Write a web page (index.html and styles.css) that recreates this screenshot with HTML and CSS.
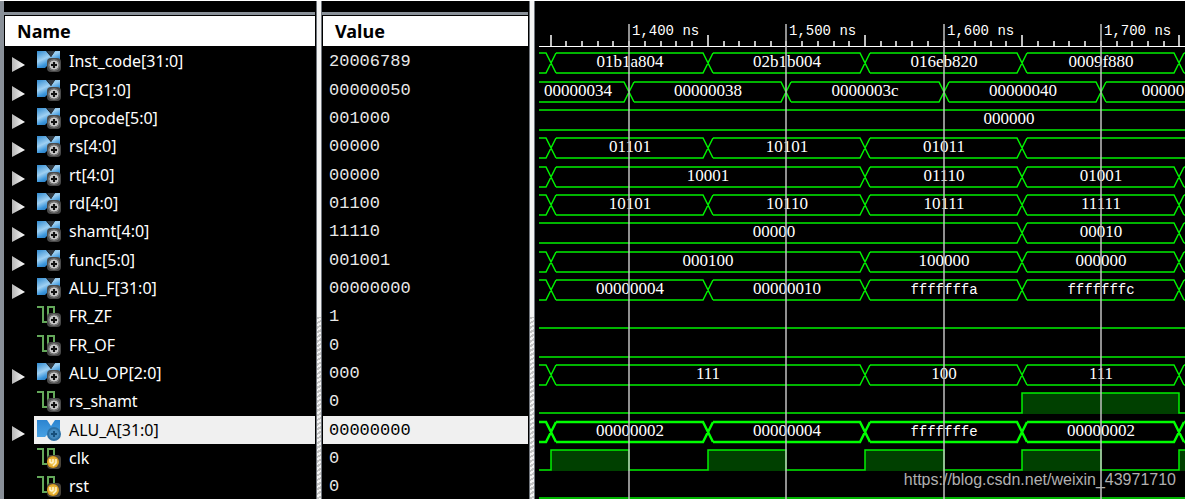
FILE: index.html
```html
<!DOCTYPE html>
<html lang="en">
<head>
<meta charset="utf-8">
<title>Waveform viewer</title>
<link rel="stylesheet" href="styles.css">
</head>
<body>
<svg class="defs" aria-hidden="true">
  <defs>
    <linearGradient id="blue" x1="0" y1="0" x2="0.6" y2="1"><stop offset="0" stop-color="#2f8ad0"/><stop offset=".45" stop-color="#9fd0f2"/><stop offset=".7" stop-color="#3d97dc"/><stop offset="1" stop-color="#1763a8"/></linearGradient>
    <linearGradient id="deep" x1="0" y1="0" x2="0" y2="1"><stop offset="0" stop-color="#2b84d0"/><stop offset="1" stop-color="#4aa3e4"/></linearGradient>
    <linearGradient id="arrow" x1="0" y1="0" x2="1" y2="0"><stop offset="0" stop-color="#b4b4b4"/><stop offset="1" stop-color="#fff"/></linearGradient>
    <radialGradient id="gold"><stop offset="0" stop-color="#ffe070"/><stop offset="1" stop-color="#d99a18"/></radialGradient>
    <symbol id="expander" viewBox="0 0 14 16"><path d="M0 0L13 8L0 15Z" fill="url(#arrow)"/></symbol>
    <symbol id="gear" viewBox="0 0 14 14"><rect width="14" height="14" rx="4" fill="#4a4a4a"/><circle cx="7" cy="7" r="6" fill="#777"/><circle cx="7" cy="7" r="4" fill="#b8b8b8" stroke="#d0d0d0" stroke-width="1"/><path d="M7 4V10M4 7H10" stroke="#111" stroke-width="2"/></symbol>
    <symbol id="bus" viewBox="0 0 25 23"><path d="M0 1H9L14 7L18 1H23V19H14L10 16L8 18H0Z" fill="url(#blue)"/><path d="M10 1L14 7L18 1Z" fill="#303840"/><use href="#gear" x="10" y="8" width="14" height="14"/></symbol>
    <symbol id="bus-on" viewBox="0 0 25 23"><path d="M0 1H10L14 7L18 1H23V19H14L10 16L8 18H0Z" fill="url(#deep)"/><circle cx="17" cy="15" r="6" fill="#4489bd" stroke="#2d71a6" stroke-width="2"/><path d="M17 12V18M14 15H20" stroke="#164e7a" stroke-width="2"/></symbol>
    <symbol id="wire" viewBox="0 0 25 23"><path d="M0 2H6V17H11V2H17V10" fill="none" stroke="#64a85a" stroke-width="2"/><use href="#gear" x="10" y="8" width="14" height="14"/></symbol>
    <symbol id="wire-in" viewBox="0 0 25 23"><path d="M0 2H6V17H11V2H17V10" fill="none" stroke="#64a85a" stroke-width="2"/><rect x="10" y="8" width="14" height="14" rx="4" fill="#4a453b"/><circle cx="16" cy="15" r="6" fill="url(#gold)"/><path d="M13 12V15Q15 17 16 15V12M19 12V16L16 19" fill="none" stroke="#fff4d0" stroke-width="1.5"/></symbol>
  </defs>
</svg>
<main class="viewer">
  <section class="panel names">
    <div class="strip"></div>
    <h2 class="heading">Name</h2>
    <ul class="rows" id="names"></ul>
  </section>
  <div class="splitter"></div>
  <section class="panel values">
    <div class="strip"></div>
    <h2 class="heading">Value</h2>
    <ul class="rows" id="values"></ul>
  </section>
  <div class="splitter"></div>
  <section class="waves">
    <svg class="ruler" id="ruler"></svg>
    <div class="rows" id="waves"></div>
    <svg class="grid" id="grid"></svg>
  </section>
  <a class="credit" href="https://blog.csdn.net/weixin_43971710">https://blog.csdn.net/weixin_43971710</a>
</main>
<script src="waves.js"></script>
</body>
</html>
```
FILE: styles.css
```css
* { box-sizing: border-box; }
body { margin: 0; background: #fff; overflow: hidden; }
.defs { position: absolute; width: 0; height: 0; }
.viewer {
  position: relative;
  display: grid;
  grid-template-columns: 316fr 6px 207fr 6px 650fr;
  height: 100vh;
  overflow: hidden;
  padding-top: 1px;
  padding-right: 1px;
  background: #fff;
}
.viewer > * { min-width: 0; }
.panel, .waves { background: #000; overflow: hidden; }
.panel { padding-right: 1px; }
.names { border-left: 4px solid #899098; }
.strip { height: 14px; border-bottom: 3px solid #899098; }
.heading {
  height: 30px;
  margin: 1px 0 1px 1px;
  padding-left: 12px;
  background: #fff;
  color: #000;
  font: bold 18px/30px "Noto Sans", "Open Sans", sans-serif;
}
.rows { margin: 0; padding: 0; list-style: none; }
.row { display: flex; height: 28px; }
.row:nth-child(3n + 1) { height: 29px; }
.expand {
  flex: none;
  width: 30px;
  padding: 7px 0 0 8px;
  border: 0;
  background: none;
  text-align: left;
  line-height: 0;
  display: block;
}
.arrow { display: block; width: 14px; height: 16px; }
.signal {
  display: flex;
  flex: 1;
  gap: 7px;
  padding: 3px 0 0 3px;
  color: #fff;
  font: 16px/22px "Noto Sans", "Open Sans", sans-serif;
  white-space: nowrap;
}
.icon { flex: none; width: 25px; height: 23px; }
.value {
  flex: 1;
  margin-left: 1px;
  padding: 1px 0 0 6px;
  color: #e8e8e8;
  font: 17px/28px "Liberation Mono", monospace;
}
.selected { background: #f0f0f0; color: #000; }
.splitter {
  border-left: 1px solid #70757c;
  border-right: 1px solid #70757c;
  background: linear-gradient(#f4f4f4 0 316px, transparent 316px), repeating-linear-gradient(150deg, #f4f4f4 0 2px, #c4c4c4 2px 4px);
}
.waves { position: relative; padding-left: 4px; }
.ruler { display: block; width: 100%; height: 46px; }
.trace { display: block; width: 100%; height: 100%; overflow: hidden; }
.grid { position: absolute; left: 4px; top: 0; width: 100%; height: 100%; pointer-events: none; }
.edge { fill: none; stroke: #00f000; stroke-width: 1.5; }
.bold { stroke: #00ff00; stroke-width: 2.5; }
.high { fill: #004000; }
.tick { stroke: #fff; stroke-width: 1.5; }
.base { stroke: #fff; stroke-width: 2; }
.guide { stroke: #c0c0c0; stroke-width: 1.5; }
.label { fill: #fff; font: 17px "Liberation Serif", serif; text-anchor: middle; }
.mono { font: 14px "Liberation Mono", monospace; }
.time { text-anchor: start; }
.credit {
  position: absolute;
  right: 10px;
  bottom: 9px;
  color: #b0b0b0;
  font: 16px/20px "Liberation Sans", sans-serif;
  text-decoration: none;
}
```
FILE: waves.js
```js
const START = 12;
const HALF = 157.2 / 2;
// Position of an edge, counted in 50 ns steps from 1,350 ns.
const at = (step) => Math.round(START + HALF * step - 0.4);
const END = 16;

// name, value, icon, trace; a trace is a list of [from, to, label] or [from, to, level].
const signals = [
  ["Inst_code[31:0]", "20006789", "bus", [[0, 2, "01b1a804"], [2, 4, "02b1b004"], [4, 6, "016eb820"], [6, 8, "0009f880"], [8, END, ""]]],
  ["PC[31:0]", "00000050", "bus", [[-1, 1, "00000034", 39], [1, 3, "00000038"], [3, 5, "0000003c"], [5, 7, "00000040"], [7, END, "00000", 624]]],
  ["opcode[5:0]", "001000", "bus", [[-4, END, "000000", 470]]],
  ["rs[4:0]", "00000", "bus", [[0, 2, "01101"], [2, 4, "10101"], [4, 6, "01011"], [6, END, ""]]],
  ["rt[4:0]", "00000", "bus", [[0, 4, "10001"], [4, 6, "01110"], [6, 8, "01001"], [8, END, ""]]],
  ["rd[4:0]", "01100", "bus", [[0, 2, "10101"], [2, 4, "10110"], [4, 6, "10111"], [6, 8, "11111"], [8, END, ""]]],
  ["shamt[4:0]", "11110", "bus", [[-4, 6, "00000", 235], [6, 8, "00010"], [8, END, ""]]],
  ["func[5:0]", "001001", "bus", [[0, 4, "000100"], [4, 6, "100000"], [6, 8, "000000"], [8, END, ""]]],
  ["ALU_F[31:0]", "00000000", "bus", [[0, 2, "00000004"], [2, 4, "00000010"], [4, 6, "fffffffa"], [6, 8, "fffffffc"], [8, END, ""]]],
  ["FR_ZF", "1", "wire", [[-1, END, 0]]],
  ["FR_OF", "0", "wire", [[-1, END, 0]]],
  ["ALU_OP[2:0]", "000", "bus", [[0, 4, "111"], [4, 6, "100"], [6, 8, "111"], [8, END, ""]]],
  ["rs_shamt", "0", "wire", [[-1, 6, 0], [6, 8, 1], [8, END, 0]]],
  ["ALU_A[31:0]", "00000000", "bus-on", [[0, 2, "00000002"], [2, 4, "00000004"], [4, 6, "fffffffe"], [6, 8, "00000002"], [8, END, ""]], true],
  ["clk", "0", "wire-in", [[-1, 0, 0], [0, 1, 1], [1, 2, 0], [2, 3, 1], [3, 4, 0], [4, 5, 1], [5, 6, 0], [6, 7, 1], [7, 8, 0], [8, 9, 1]]],
  ["rst", "0", "wire-in", [[-1, END, 0]]],
];
const TOP = 6, LOW = 26;

function busTrace(spans, bold) {
  let path = spans[0][0] === 0 ? `M0 ${TOP}H${at(0) - 5}L${at(0) + 5} ${LOW}M0 ${LOW}H${at(0) - 5}L${at(0) + 5} ${TOP}` : "";
  let labels = "";
  for (const [from, to, text, where] of spans) {
    const a = from < 0 ? 0 : at(from) + 5, b = at(to) - 5;
    path += `M${a} ${TOP}H${b}L${b + 10} ${LOW}M${a} ${LOW}H${b}L${b + 10} ${TOP}`;
    const kind = text.startsWith("fff") ? "label mono" : "label";
    if (text) labels += `<text class="${kind}" x="${where || Math.round((at(from) + at(to)) / 2)}" y="20">${text}</text>`;
  }
  return `<path class="edge ${bold ? "bold" : ""}" d="${path}"/>${labels}`;
}

function wireTrace(spans) {
  let path = "", fill = "";
  for (const [from, to, level] of spans) {
    const a = Math.max(0, at(from)), b = at(to), y = level ? TOP : LOW;
    path += `${path ? "V" + y : "M" + a + " " + y}H${b}`;
    if (level) fill += `<rect class="high" x="${a}" y="${TOP}" width="${b - a}" height="${LOW - TOP + 1}"/>`;
  }
  return `${fill}<path class="edge" d="${path}"/>`;
}

let names = "", values = "", waves = "";
for (const [name, value, icon, spans, selected] of signals) {
  const on = selected ? "selected" : "";
  const isBus = icon.startsWith("bus");
  const arrow = isBus
    ? `<button class="expand" aria-label="Expand ${name}"><svg class="arrow"><use href="#expander"/></svg></button>`
    : `<span class="expand"></span>`;
  names += `<li class="row">${arrow}<span class="signal ${on}"><svg class="icon"><use href="#${icon}"/></svg>${name}</span></li>`;
  values += `<li class="row"><span class="value ${on}">${value}</span></li>`;
  waves += `<div class="row"><svg class="trace">${isBus ? busTrace(spans, selected) : wireTrace(spans)}</svg></div>`;
}
document.getElementById("names").innerHTML = names;
document.getElementById("values").innerHTML = values;
document.getElementById("waves").innerHTML = waves;

let ticks = `<path class="tick base" d="M0 46H2000"/>`, guides = "";
for (let i = 0; i < 60; i++) {
  const x = Math.round(START + 15.72 * i - 0.4);
  ticks += `<path class="tick" d="M${x} ${i % 10 === 0 ? 34 : 40}V46"/>`;
}
for (let i = 0; i < 4; i++) {
  const x = at(1 + 2 * i);
  ticks += `<text class="label mono time" x="${x + 3}" y="34">1,${4 + i}00 ns</text>`;
  guides += `<path class="guide" d="M${x} 23V2000"/>`;
}
document.getElementById("ruler").innerHTML = ticks;
document.getElementById("grid").innerHTML = guides;
```
